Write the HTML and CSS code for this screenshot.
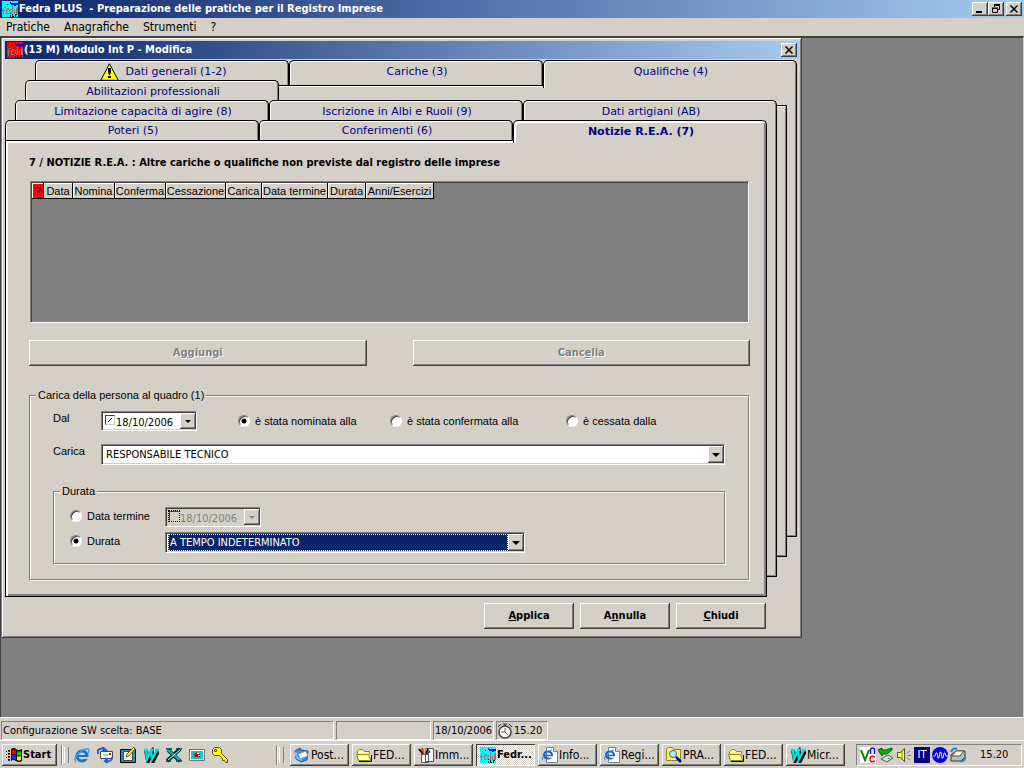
FILE: index.html
```html
<!DOCTYPE html>
<html lang="it">
<head>
<meta charset="utf-8">
<title>Fedra PLUS</title>
<link rel="stylesheet" href="styles.css">
</head>
<body>
<svg class="defs" aria-hidden="true">
  <defs>
    <symbol id="logo" viewBox="0 0 16 16">
      <path fill="blue" d="M8 2h8v1H8zM5 3h1v1H5zM8 1h1v1H8zM9 3h7v1H9zM12 4h2v1h-2z"/>
      <path fill="none" stroke="#808080" d="M1.500 14V7.500l1-1H4M0 9.500h3M4 9.500h2l1-2H4.500v5H7M9.500 8.500H8v4h2.500V4.500M12.500 13V8.500M14.500 13V7l1-1v7"/>
      <path d="M8 12h1v1H8zM8 14h1v2H8zM10 13h1v2h1v1h-2zM13 13h2v1h-1v2h-1z"/>
    </symbol>
    <symbol id="folder" viewBox="0 0 16 16">
      <path fill="#fff3a0" stroke="#8c8c00" d="M1.500 12V4.500l2-2h3l2 2h5v3"/>
      <path fill="#ffffb8" stroke="#8c8c00" d="M.5 7.500h12l2 6h-12z"/>
      <path stroke="#000" fill="none" d="M3 14.500h12.500V8"/>
    </symbol>
    <symbol id="iepage" viewBox="0 0 16 16">
      <path fill="#fff" stroke="#808080" d="M4.500.5h7l4 4v11h-11z"/>
      <path fill="#ddd" stroke="#808080" d="M11.500.5v4h4"/>
      <ellipse cx="6" cy="8" rx="4" ry="3.500" fill="none" stroke="#1559c4" stroke-width="2"/>
      <path stroke="#1559c4" stroke-width="1.500" d="M3 8.500h7"/>
      <path stroke="#fff" stroke-width="1.500" d="M7 10h4"/>
      <path stroke="#2b8be8" fill="none" d="M1 13C-1 12 3 4 10 3"/>
    </symbol>
    <symbol id="wlogo" viewBox="0 0 16 16">
      <path fill="none" stroke="#000" stroke-width="4" d="M3 3l2 11 4-8 1 8 5-10"/>
      <path fill="none" stroke="#00e0e0" stroke-width="2.500" d="M1 3h4M7 3h3M12 3h4M3 3l1 9 4-8 1 8 5-9"/>
    </symbol>
  </defs>
</svg>

<header class="titlebar">
  <svg class="icon app-icon"><use href="#logo"/></svg>
  <h1 class="title">Fedra PLUS&nbsp; - Preparazione delle pratiche per il Registro Imprese</h1>
  <div class="window-controls">
    <button class="caption-button" aria-label="Riduci"><svg viewBox="0 0 12 10"><path d="M2 7h6v2H2z"/></svg></button>
    <button class="caption-button" aria-label="Ripristina"><svg viewBox="0 0 12 10"><path fill="none" stroke="#000" d="M4 .5h6M4 1.500h5.500v4H8M4.500 1v2M2 4h6M2 4.500h5.500v4h-5v-4"/></svg></button>
    <button class="caption-button caption-close" aria-label="Chiudi finestra"><svg viewBox="0 0 12 10"><path fill="none" stroke="#000" stroke-width="1.500" d="M2.500 1.500l7 7M9.500 1.500l-7 7"/></svg></button>
  </div>
</header>
<nav class="menubar">
  <button class="menu">Pratiche</button>
  <button class="menu">Anagrafiche</button>
  <button class="menu">Strumenti</button>
  <button class="menu">?</button>
</nav>

<main class="workspace">
  <section class="window">
    <header class="titlebar child-title">
      <svg class="icon app-icon red"><use href="#logo"/></svg>
      <h2 class="title">(13 M) Modulo Int P - Modifica</h2>
      <button class="caption-button" aria-label="Chiudi modulo"><svg viewBox="0 0 12 10"><path fill="none" stroke="#000" stroke-width="1.500" d="M2.500 1.500l7 7M9.500 1.500l-7 7"/></svg></button>
    </header>
    <div class="window-body">
      <div class="deck">
        <div class="sheet sheet-1"></div>
        <div class="tabs tabs-1">
          <button class="tab"><svg class="warning" viewBox="0 0 19 18"><path fill="#ff0" stroke="#000" d="M9.500.8L18.300 17.300H.7z"/><path d="M8 5h3v4l-1 3H9L8 9zM8 13h3v2H8z"/></svg>Dati generali (1-2)</button>
          <button class="tab">Cariche (3)</button>
          <button class="tab front">Qualifiche (4)</button>
        </div>
        <div class="sheet sheet-2"></div>
        <div class="tabs tabs-2">
          <button class="tab">Abilitazioni professionali</button>
        </div>
        <div class="sheet sheet-3"></div>
        <div class="tabs tabs-3">
          <button class="tab">Limitazione capacità di agire (8)</button>
          <button class="tab">Iscrizione in Albi e Ruoli (9)</button>
          <button class="tab front">Dati artigiani (AB)</button>
        </div>
        <div class="tabs tabs-4">
          <button class="tab">Poteri (5)</button>
          <button class="tab">Conferimenti (6)</button>
          <button class="tab front selected">Notizie R.E.A. (7)</button>
        </div>
        <div class="panel">
          <h3 class="heading">7 / NOTIZIE R.E.A. : Altre cariche o qualifiche non previste dal registro delle imprese</h3>
          <div class="listbox">
            <table class="grid">
              <colgroup><col class="w12"><col class="w29"><col class="w42"><col class="w51"><col class="w60"><col class="w36"><col class="w66"><col class="w38"><col class="w68"></colgroup>
              <thead><tr><th class="flag">?</th><th>Data</th><th>Nomina</th><th>Conferma</th><th>Cessazione</th><th>Carica</th><th>Data termine</th><th>Durata</th><th>Anni/Esercizi</th></tr></thead>
            </table>
          </div>
          <div class="actions">
            <button class="button" disabled>A<u>g</u>giungi</button>
            <button class="button" disabled>Canc<u>e</u>lla</button>
          </div>
          <fieldset class="group">
            <legend>Carica della persona al quadro (1)</legend>
            <div class="row">
              <label class="caption" for="dal">Dal</label>
              <div class="date">
                <input type="checkbox" class="tick" aria-label="Data attiva" checked>
                <input type="text" class="date-text" id="dal" value="18/10/2006">
                <button class="arrow" aria-label="Apri calendario"></button>
              </div>
              <div class="choices">
                <label class="choice"><input type="radio" name="stato" checked>è stata nominata alla</label>
                <label class="choice"><input type="radio" name="stato">è stata confermata alla</label>
                <label class="choice"><input type="radio" name="stato">è cessata dalla</label>
              </div>
            </div>
            <div class="row row-role">
              <label class="caption" for="carica">Carica</label>
              <div class="combo">
                <select id="carica"><option>RESPONSABILE TECNICO</option></select>
                <span class="arrow"></span>
              </div>
            </div>
            <fieldset class="group duration">
              <legend>Durata</legend>
              <div class="row">
                <label class="choice term"><input type="radio" name="durata">Data termine</label>
                <div class="date disabled">
                  <input type="checkbox" class="tick" aria-label="Data termine attiva" disabled>
                  <input type="text" class="date-text" aria-label="Data termine" value="18/10/2006" disabled>
                  <button class="arrow" aria-label="Apri calendario" disabled></button>
                </div>
              </div>
              <div class="row">
                <label class="choice term"><input type="radio" name="durata" checked>Durata</label>
                <div class="combo highlighted">
                  <select aria-label="Durata"><option>A TEMPO INDETERMINATO</option></select>
                  <span class="arrow"></span>
                </div>
              </div>
            </fieldset>
          </fieldset>
        </div>
      </div>
      <footer class="dialog-buttons">
        <button class="button"><u>A</u>pplica</button>
        <button class="button">A<u>n</u>nulla</button>
        <button class="button"><u>C</u>hiudi</button>
      </footer>
    </div>
  </section>
</main>

<div class="statusbar">
  <div class="cell cell-main">Configurazione SW scelta: BASE</div>
  <div class="cell cell-empty"></div>
  <div class="cell cell-date">18/10/2006</div>
  <div class="cell cell-time">
    <svg class="icon clock-icon" viewBox="0 0 16 16"><circle cx="8" cy="9" r="6" fill="#fff" stroke="#444" stroke-width="1.500"/><path stroke="#333" fill="none" d="M6 1h4M8 1v2M1 4l3-3M15 4l-3-3"/><path stroke="#e03030" fill="none" d="M4 9h4l3 3M8 5v4"/></svg>15.20</div>
</div>

<footer class="taskbar">
  <button class="start"><svg class="icon" viewBox="0 0 16 16"><path d="M5 2q3-2 5 0t6 0v12q-3 2-6 0t-5 0zM0 4h1v1H0zM2 3h2v2H2zM0 7h1v1H0zM2 6h2v2H2zM0 10h1v1H0zM2 9h2v2H2zM2 12h2v2H2z"/><path fill="red" d="M6 3q2-1 4 0v4q-2-1-4 0zM2 4h2v1H2zM2 7h2v1H2z"/><path fill="#0c0" d="M11 4q2 1 4 0v4q-2 1-4 0z"/><path fill="#22f" d="M6 8q2-1 4 0v5q-2-1-4 0zM2 10h2v1H2zM2 13h2v1H2z"/><path fill="#fe0" d="M11 9q2 1 4 0v4q-2 1-4 0z"/></svg>Start</button>
  <span class="grip"></span>
  <div class="quick">
    <button class="quick-button" aria-label="Internet Explorer"><svg class="icon" viewBox="0 0 16 16"><circle cx="8" cy="9" r="5" fill="none" stroke="#1673cf" stroke-width="3"/><path stroke="#1673cf" stroke-width="2" d="M4 9h10"/><path stroke="#d4d0c8" stroke-width="2" d="M9 11h6"/><path stroke="#3ba1ef" stroke-width="1.500" fill="none" d="M2 15C-2 12 7 1 14 2q2 1 0 4"/></svg></button>
    <button class="quick-button" aria-label="Posta"><svg class="icon" viewBox="0 0 16 16"><path fill="#fff" stroke="#444" d="M3.500 4.500h12v7h-12z"/><path stroke="#888" fill="none" d="M6 8h5"/><path fill="red" d="M12 6h2v2h-2z"/><path fill="none" stroke="#2060e0" stroke-width="2" d="M1 7V3q4-3 7 0M5 0l4 3-4 1M15 10q0 5-6 4M11 11l-3 3 3 2"/></svg></button>
    <button class="quick-button" aria-label="Desktop"><svg class="icon" viewBox="0 0 16 16"><path fill="#2094b8" stroke="#000" d="M.5 2.500h15v13H.5z"/><path fill="#fff" stroke="#444" d="M3.500 4.500h9v9h-9z"/><path fill="#ffe060" stroke="#70500a" d="M6 10l1-3 7-7 1 2-6 7z"/></svg></button>
    <button class="quick-button" aria-label="Word"><svg class="icon"><use href="#wlogo"/></svg></button>
    <button class="quick-button" aria-label="Excel"><svg class="icon" viewBox="0 0 16 16"><path stroke="#033" stroke-width="4" d="M2 3l12 11M14 2L1 14"/><path stroke="#00b0b0" stroke-width="2.500" d="M2 3l12 10"/><path stroke="#bff" stroke-width="1" d="M14 3L2 13"/><path stroke="#044" stroke-width="1.500" d="M0 2h6M10 2h6M0 14h5M10 14h6"/></svg></button>
    <button class="quick-button" aria-label="Schermo"><svg class="icon" viewBox="0 0 16 16"><path fill="#fff" stroke="#777" d="M.5 2.500h15v11H.5z"/><path fill="#0cc" d="M2 4h12v8H2z"/><path fill="#c00" d="M5 7l3-2v2h3v3H6z"/><path fill="#fff" d="M8 6h2v1H8zM9 8h2v1H9z"/></svg></button>
    <button class="quick-button" aria-label="Chiave"><svg class="icon" viewBox="0 0 16 16"><path fill="#ff0" stroke="#554a00" d="M.5 2.500l2-2h5l2 2v4l6 6v3h-2l-1-2h-2v-2l-3-3h-5l-2-2z"/><path fill="#d4d0c8" stroke="#554a00" d="M2.500 2.500h2v2h-2z"/></svg></button>
  </div>
  <span class="grip"></span>
  <div class="tasks">
    <button class="task"><svg class="icon" viewBox="0 0 16 16"><path fill="#3a8de0" stroke="#1b59a8" d="M1 4l5-3 1 2 7 1-1 9-6 2-5-3z"/><path fill="#fff" stroke="#88a" d="M4 7l8-3 2 5-8 3z"/><path stroke="#6ac0ff" stroke-width="2" fill="none" d="M2 5q-1 7 6 8"/></svg>Post...</button>
    <button class="task"><svg class="icon"><use href="#folder"/></svg>FED...</button>
    <button class="task"><svg class="icon" viewBox="0 0 16 16"><path fill="#fff" stroke="#555" d="M7.500 1.500h8v13h-8zM3.500 7.500h7v8h-7z"/><path stroke="#000" stroke-width="2" d="M1 2l4 5M10 2L8 7"/><path stroke="#d33" stroke-width="2" d="M4 1l2 6"/><path stroke="#33a" stroke-width="2" d="M12 4L9 7"/><path stroke="#eb0" d="M7 1v6"/></svg>Imm...</button>
    <button class="task current"><svg class="icon app-icon"><use href="#logo"/></svg>Fedr...</button>
    <button class="task"><svg class="icon"><use href="#iepage"/></svg>Info...</button>
    <button class="task"><svg class="icon"><use href="#iepage"/></svg>Regi...</button>
    <button class="task"><svg class="icon" viewBox="0 0 16 16"><path fill="#fff08a" stroke="#8c8c00" d="M.5 13.500v-11l2-2h4l1 2h7v11z"/><circle cx="7" cy="7" r="3.500" fill="#9ff" stroke="#555"/><path stroke="#00a" stroke-width="2.500" d="M10 10l5 5"/></svg>PRA...</button>
    <button class="task"><svg class="icon"><use href="#folder"/></svg>FED...</button>
    <button class="task"><svg class="icon"><use href="#wlogo"/></svg>Micr...</button>
  </div>
  <div class="tray">
    <svg class="icon" viewBox="0 0 16 16"><path fill="#fff" d="M0 0h16v16H0z"/><path fill="none" stroke="#080" stroke-width="2" d="M1 3l4 10L9 3"/><path fill="none" stroke="#00f" stroke-width="1.500" d="M10.500 7V2q2-2 4 0v5"/><path fill="none" stroke="#e00" stroke-width="1.500" d="M15 10q-5-2-5 2t5 2"/></svg>
    <svg class="icon" viewBox="0 0 16 16"><path fill="#ddd" stroke="#555" d="M3 12l7-4 5 3-6 4z"/><path fill="#0b0" stroke="#050" d="M0 3l4-2v2h4l6-2v2L9 7H4v2z"/><path fill="#0d0" d="M10 11h2v1h-2z"/></svg>
    <svg class="icon" viewBox="0 0 16 16"><path fill="#ff6" stroke="#550" d="M1.500 5.500h3l4-4v13l-4-4h-3z"/><path stroke="#777" fill="none" d="M6 3v10M11 6l3-2M11 8.500h4M11 11l3 2"/></svg>
    <span class="lang">IT</span>
    <svg class="icon" viewBox="0 0 16 16"><circle cx="8" cy="8" r="8" fill="#00e"/><path fill="none" stroke="#ff0" d="M1 9h2l1-3h1l1 5h1l1-6h1l1 6h1l1-5h1l1 3h2"/></svg>
    <svg class="icon" viewBox="0 0 16 16"><path fill="#bbb" stroke="#333" d="M1 8l5-4h9v6l-4 4H1z"/><path fill="#ffc" stroke="#555" d="M2 9l4-5h8l-4 5z"/><path fill="none" stroke="#1686d8" stroke-width="2" d="M1 5q2-5 6-3M15 10q0 5-5 4"/></svg>
    <time class="clock">15.20</time>
  </div>
</footer>
</body>
</html>
```
FILE: styles.css
```css
:root {
  --face: #d4d0c8;
  --shadow: #808080;
  --dark: #404040;
  --navy: #0a246a;
  --ui: "DejaVu Sans Condensed", "DejaVu Sans", sans-serif;
  --label: "Liberation Sans", sans-serif;
}
* { box-sizing: border-box; }
body {
  margin: 0;
  min-height: 100vh;
  display: flex;
  flex-direction: column;
  background: var(--face);
  color: #000;
  font: 11px/14px var(--ui);
}
button, input, select { font: inherit; color: inherit; margin: 0; padding: 0; }
button { background: var(--face); border: 0; white-space: nowrap; }
.defs { position: absolute; width: 0; height: 0; }
.icon { width: 16px; height: 16px; flex: none; }
.app-icon { background: #0ff; }
.red { background: red; }

/* Title bars and menu */
.titlebar {
  display: flex;
  align-items: center;
  height: 18px;
  padding: 0 2px;
  background: linear-gradient(to right, #0a246a, #a6caf0);
  color: #fff;
}
.title {
  flex: 1;
  margin: 0 0 0 1px;
  font: bold 11px/16px var(--ui);
  white-space: nowrap;
}
.window-controls { display: flex; }
.caption-button {
  width: 16px;
  height: 14px;
  display: grid;
  place-items: center;
  box-shadow: inset -1px -1px var(--dark), inset 1px 1px #fff, inset -2px -2px var(--shadow);
}
.caption-button svg { width: 12px; height: 10px; }
.caption-close { margin-left: 2px; }
.menubar { display: flex; gap: 14px; height: 18px; padding: 0 6px; }
.menu { font-size: 12px; line-height: 16px; }

/* Workspace */
.workspace {
  flex: 1;
  padding-left: 2px;
  background: var(--shadow);
  border: solid;
  border-width: 2px 1px 1px 0;
  border-color: var(--dark) var(--face) #fff;
  box-shadow: inset 1px 0 var(--dark);
}
.window {
  width: 100%;
  max-width: 800px;
  padding: 3px;
  background: var(--face);
  box-shadow: inset -1px -1px var(--dark), inset 1px 1px #fff, inset -2px -2px var(--shadow);
}
.window-body { padding: 1px 2px 6px 0; }

/* Stacked tab sheets */
.deck { position: relative; }
.sheet {
  position: absolute;
  background: var(--face);
  border: 1px solid #000;
  box-shadow: inset 1px 1px #fff, inset -1px -1px var(--shadow);
}
.sheet-1 { inset: 25px 0 60px 30px; }
.sheet-2 { inset: 45px 10px 40px 20px; }
.sheet-3 { inset: 65px 20px 20px 10px; }
.tabs {
  position: relative;
  display: grid;
  grid-template-columns: repeat(3, 1fr);
  align-items: start;
  height: 20px;
}
.tabs-1 { margin: 0 0 0 30px; }
.tabs-2 { margin: 0 10px 0 20px; }
.tabs-3 { margin: 0 20px 0 10px; }
.tabs-4 { margin: 0 30px 0 0; z-index: 1; }
.tab {
  display: flex;
  justify-content: center;
  align-items: center;
  gap: 7px;
  height: 25px;
  padding: 0 0 3px 2px;
  border: 1px solid #000;
  border-bottom: 0;
  border-radius: 5px 5px 0 0;
  box-shadow: inset 1px 1px #fff, inset -1px 0 var(--shadow);
  color: #000080;
  font: 11px/16px "DejaVu Sans", sans-serif;
}
.tabs-4 .tab { height: 20px; padding-bottom: 0; }
.front { height: 28px; padding-bottom: 6px; }
.tabs-4 .selected {
  height: 23px;
  box-shadow: inset 2px 2px #fff, inset -2px 0 var(--shadow);
  font-weight: bold;
}
.warning { width: 19px; height: 18px; }
.panel {
  position: relative;
  margin-right: 30px;
  padding: 14px 16px 16px 23px;
  background: var(--face);
  border: solid #000;
  border-width: 1px;
  box-shadow: inset 2px 2px #fff, inset -2px -2px var(--shadow);
}
.heading { margin: 0 0 10px; font: bold 11px/16px var(--ui); }
.listbox {
  height: 142px;
  margin: 0 1px;
  background: var(--shadow);
  border: 1px solid;
  border-color: var(--shadow) #fff #fff var(--shadow);
  box-shadow: inset 1px 1px var(--dark);
  padding: 1px;
}
.grid { table-layout: fixed; width: 402px; border-collapse: separate; border-spacing: 0; }
.grid th {
  height: 16px;
  padding: 0;
  background: var(--face);
  border-right: 1px solid #000;
  border-bottom: 1px solid #000;
  box-shadow: inset 1px 1px #fff;
  font: 11px/14px var(--label);
  white-space: nowrap;
}
.grid .flag { background: red; }
.w12 { width: 12px; }
.w29 { width: 29px; }
.w42 { width: 42px; }
.w51 { width: 51px; }
.w60 { width: 60px; }
.w36 { width: 36px; }
.w66 { width: 66px; }
.w38 { width: 38px; }
.w68 { width: 68px; }
.button {
  height: 26px;
  box-shadow: inset -1px -1px var(--dark), inset 1px 1px #fff, inset -2px -2px var(--shadow);
  font-weight: bold;
}
.button:disabled { color: var(--shadow); text-shadow: 1px 1px #fff; }
.actions { display: grid; grid-template-columns: 1fr 1fr; gap: 46px; margin: 17px 0 22px; }

/* Form */
.group {
  min-width: 0;
  margin: 0 1px 0 0;
  padding: 9px 23px 15px;
  border: 1px solid var(--shadow);
  box-shadow: inset 1px 1px #fff, 1px 1px #fff;
}
.group legend { margin-left: -17px; padding: 0 2px; background: var(--face); font-family: var(--label); }
.row { display: flex; align-items: center; }
.caption { width: 48px; height: 18px; font-family: var(--label); align-self: flex-start; }
.date, .combo {
  display: flex;
  background: #fff;
  border: 1px solid;
  border-color: var(--shadow) #fff #fff var(--shadow);
  box-shadow: inset 1px 1px var(--dark), inset -1px -1px var(--face);
}
.date { width: 96px; height: 20px; padding: 1px 0 1px 2px; }
.tick {
  appearance: none;
  width: 10px;
  height: 10px;
  margin: 2px 1px 0;
  flex: none;
  border: 1px solid;
  border-color: var(--dark) var(--face) var(--face) var(--dark);
}
.tick:checked { background: linear-gradient(135deg, transparent 40%, #000 40% 60%, transparent 60%) center / 4px 4px no-repeat; }
.date-text { flex: 1; min-width: 0; border: 0; background: none; outline: 0; height: 16px; padding-top: 2px; }
.arrow {
  flex: none;
  width: 16px;
  display: grid;
  place-items: center;
  background: var(--face);
  box-shadow: inset -1px -1px var(--dark), inset 1px 1px #fff, inset -2px -2px var(--shadow);
}
.arrow::before { content: ""; border: 4px solid transparent; border-top-color: #000; border-bottom: 0; }
.date .arrow::before { border-width: 3px 3px 0; }
.disabled { background: var(--face); color: var(--shadow); }
.disabled .arrow::before { border-top-color: var(--shadow); }
.disabled .tick { outline: 1px dotted #000; }
.choices { display: grid; grid-template-columns: 152px 176px auto; margin-left: 41px; }
.choice { display: flex; align-items: center; gap: 5px; white-space: nowrap; font-family: var(--label); }
.choice input {
  appearance: none;
  width: 12px;
  height: 12px;
  border: 1px solid;
  border-color: var(--shadow) #fff #fff var(--shadow);
  border-radius: 50%;
  background: #fff;
  box-shadow: inset 1px 1px var(--dark);
}
.choice input:checked { background: radial-gradient(circle, #000 2px, #fff 3px); }
.row-role { margin: 13px 0 19px; }
.combo { flex: 1; height: 21px; padding: 1px 0 1px 2px; }
.combo select {
  appearance: none;
  flex: 1;
  min-width: 0;
  border: 0;
  border-radius: 0;
  background: none;
  padding: 1px 0 0 2px;
  outline: 0;
}
.duration { margin: 0; padding: 9px 16px 10px; }
.duration legend { margin-left: -10px; }
.duration .row + .row { margin-top: 5px; }
.term { width: 95px; align-self: flex-start; height: 18px; }
.duration .combo { flex: 0 1 360px; }
.highlighted select { background: var(--navy); color: #fff; outline: 1px dotted #ffd; outline-offset: -1px; }
.dialog-buttons { display: flex; justify-content: flex-end; gap: 6px; margin: 6px 31px 0 0; }
.dialog-buttons .button { width: 90px; }

/* Status bar */
.statusbar { display: flex; gap: 2px; height: 22px; padding: 3px 1px 0; }
.cell {
  display: flex;
  align-items: center;
  padding: 0 2px;
  border: 1px solid;
  border-color: var(--shadow) #fff #fff var(--shadow);
  white-space: nowrap;
}
.cell-main { width: 333px; padding-left: 1px; }
.cell-empty { width: 95px; }
.cell-date { width: 61px; padding: 0 1px; }
.cell-time { width: 52px; gap: 1px; padding: 0; }
.clock-icon { background: #c8c8c8; }

/* Taskbar */
.taskbar {
  display: flex;
  align-items: center;
  height: 28px;
  padding: 3px 2px 2px;
  border-top: 1px solid #fff;
}
.start, .task {
  display: flex;
  align-items: center;
  height: 22px;
  box-shadow: inset -1px -1px var(--dark), inset 1px 1px #fff, inset -2px -2px var(--shadow);
}
.start { width: 55px; padding-left: 4px; gap: 1px; font-weight: bold; }
.grip { width: 9px; height: 20px; margin-left: 4px; border-left: 1px solid var(--shadow); box-shadow: inset 1px 0 #fff; position: relative; }
.grip::after { content: ""; position: absolute; inset: 2px 1px 2px auto; width: 3px; border-right: 1px solid var(--shadow); border-left: 1px solid #fff; }
.quick { display: flex; gap: 7px; margin-left: 4px; flex: 0 0 198px; }
.quick-button { width: 16px; height: 16px; }
.tasks { display: flex; flex: 1; gap: 3px; margin-left: 5px; }
.task { flex: 0 1 59px; min-width: 0; padding: 0 0 0 4px; gap: 1px; overflow: hidden; font-size: 12px; }
.current {
  background: repeating-conic-gradient(#fff 0 25%, #d4d0c8 0 50%) 0 0 / 2px 2px;
  box-shadow: inset 1px 1px var(--dark), inset -1px -1px #fff;
  font-weight: bold;
  font-size: 11px;
}
.tray {
  display: flex;
  align-items: center;
  gap: 2px;
  width: 166px;
  height: 22px;
  padding-left: 3px;
  border: 1px solid;
  border-color: var(--shadow) #fff #fff var(--shadow);
}
.lang { width: 16px; height: 16px; background: #000080; color: #fff; text-align: center; line-height: 16px; }
.clock { margin-left: 12px; }
```
